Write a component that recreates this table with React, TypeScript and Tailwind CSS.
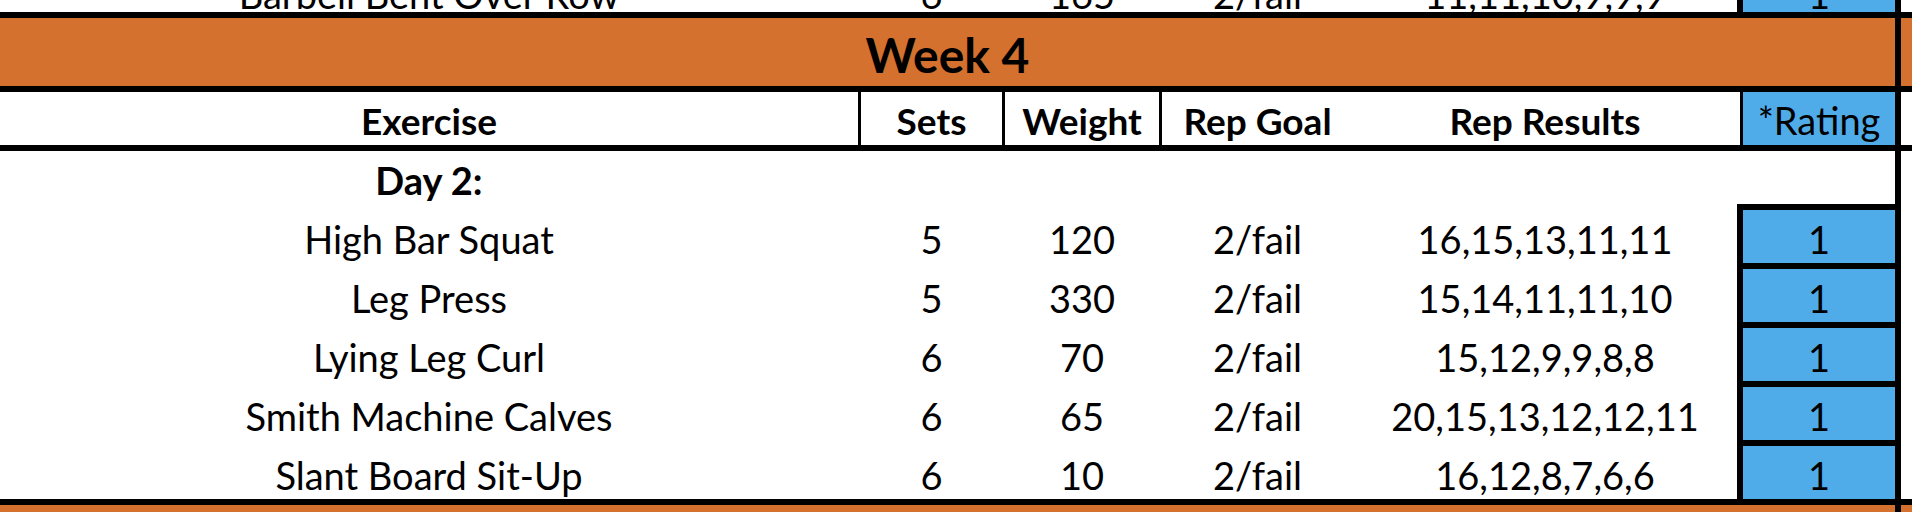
import React from "react";

const FONT = { fontFamily: "Lato, 'Open Sans', sans-serif" };

type Row = { name: string; sets: string; weight: string; goal: string; results: string; rating: string };

const rows: Row[] = [
  { name: "High Bar Squat", sets: "5", weight: "120", goal: "2/fail", results: "16,15,13,11,11", rating: "1" },
  { name: "Leg Press", sets: "5", weight: "330", goal: "2/fail", results: "15,14,11,11,10", rating: "1" },
  { name: "Lying Leg Curl", sets: "6", weight: "70", goal: "2/fail", results: "15,12,9,9,8,8", rating: "1" },
  { name: "Smith Machine Calves", sets: "6", weight: "65", goal: "2/fail", results: "20,15,13,12,12,11", rating: "1" },
  { name: "Slant Board Sit-Up", sets: "6", weight: "10", goal: "2/fail", results: "16,12,8,7,6,6", rating: "1" },
];

const cellBase = "flex items-end justify-center leading-none pb-[5px] whitespace-nowrap";

function DataRow({ r }: { r: Row }) {
  return (
    <div className="flex h-[53px] text-[38px] text-black">
      <div className={`w-[858px] ${cellBase}`}>{r.name}</div>
      <div className="w-[3px]" />
      <div className={`w-[141px] ${cellBase}`}>{r.sets}</div>
      <div className="w-[3px]" />
      <div className={`w-[154px] ${cellBase}`}>{r.weight}</div>
      <div className="w-[3px]" />
      <div className={`w-[191px] ${cellBase}`}>{r.goal}</div>
      <div className={`w-[384px] ${cellBase}`}>{r.results}</div>
      <div className="w-[6px] bg-black" />
      <div className={`w-[152px] bg-[#4FACE9] ${cellBase}`}>{r.rating}</div>
      <div className="w-[6px] bg-black" />
      <div className="w-[11px]" />
    </div>
  );
}

function RatingSep() {
  return (
    <div className="flex h-[6px]">
      <div className="w-[1737px]" />
      <div className="w-[164px] bg-black" />
      <div className="w-[11px]" />
    </div>
  );
}

function FullLine() {
  return <div className="h-[6px] w-[1912px] bg-black" />;
}

function OrangeRow({ h, children }: { h: string; children?: React.ReactNode }) {
  return (
    <div className={`flex ${h}`}>
      <div className="w-[1895px] bg-[#D4712F] flex items-end justify-center leading-none pb-[7px] text-[48px] font-bold text-black">
        {children}
      </div>
      <div className="w-[6px] bg-black" />
      <div className="w-[11px] bg-[#D4712F]" />
    </div>
  );
}

const hdr = "flex items-end justify-center leading-none pb-[6px] whitespace-nowrap";

export default function App() {
  return (
    <div className="w-[1912px] h-[512px] overflow-hidden bg-white text-black" style={FONT}>
      {/* partial previous row */}
      <div className="h-[12px] overflow-hidden">
        <div className="mt-[-35px]">
          <DataRow r={{ name: "Barbell Bent Over Row", sets: "6", weight: "165", goal: "2/fail", results: "11,11,10,9,9,9", rating: "1" }} />
        </div>
      </div>
      <FullLine />
      <OrangeRow h="h-[68px]">Week 4</OrangeRow>
      <FullLine />
      {/* header */}
      <div className="flex h-[53px] text-[37px]">
        <div className={`w-[858px] font-bold ${hdr}`}>Exercise</div>
        <div className="w-[3px] bg-black" />
        <div className={`w-[141px] font-bold ${hdr}`}>Sets</div>
        <div className="w-[3px] bg-black" />
        <div className={`w-[154px] font-bold ${hdr}`}>Weight</div>
        <div className="w-[3px] bg-black" />
        <div className={`w-[191px] font-bold ${hdr}`}>Rep Goal</div>
        <div className={`w-[384px] font-bold ${hdr}`}>Rep Results</div>
        <div className="w-[3px]" />
        <div className="w-[3px] bg-black" />
        <div className={`w-[152px] bg-[#4FACE9] text-[38px] ${hdr}`}>*Rating</div>
        <div className="w-[6px] bg-black" />
        <div className="w-[11px]" />
      </div>
      <FullLine />
      {/* Day 2 */}
      <div className="flex h-[53px]">
        <div className={`w-[858px] text-[38px] font-bold ${cellBase}`}>Day 2:</div>
        <div className="w-[1037px]" />
        <div className="w-[6px] bg-black" />
        <div className="w-[11px]" />
      </div>
      <RatingSep />
      {rows.map((r, i) => (
        <React.Fragment key={r.name}>
          <DataRow r={r} />
          {i < rows.length - 1 ? <RatingSep /> : null}
        </React.Fragment>
      ))}
      <FullLine />
      <OrangeRow h="h-[7px]" />
    </div>
  );
}
